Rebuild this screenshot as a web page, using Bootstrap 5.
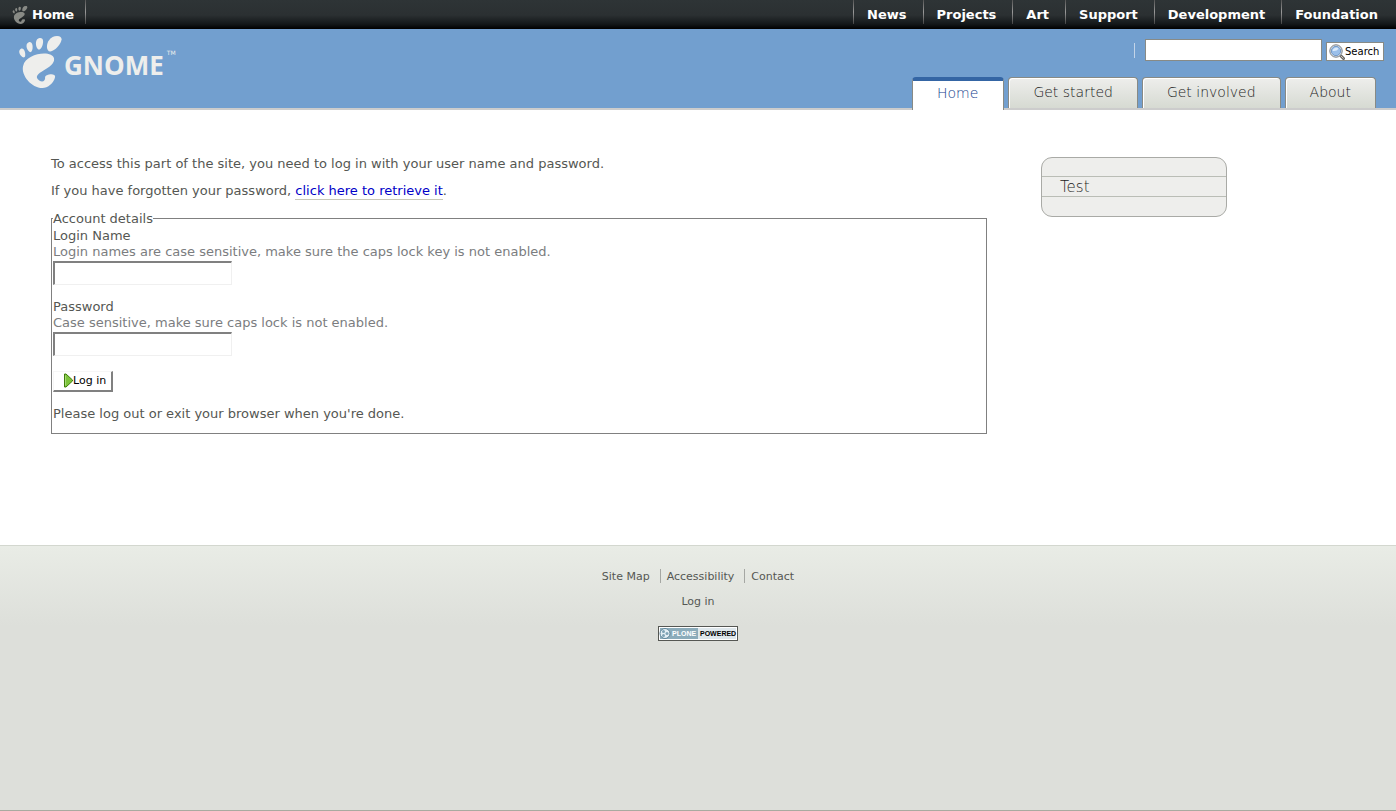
<!DOCTYPE html>
<html lang="en">
<head>
<meta charset="utf-8">
<meta name="viewport" content="width=device-width, initial-scale=1">
<title>GNOME - Log in</title>
<link rel="stylesheet" href="https://cdn.jsdelivr.net/npm/bootstrap@5.3.0/dist/css/bootstrap.min.css">
<style>
body { font: 13px/16px "DejaVu Sans", sans-serif; color: #555753; background: #fff; }
a { color: inherit; text-decoration: none; }
p { margin-bottom: 11px; }

.site-bar { height: 29px; padding-right: 2px; background: linear-gradient(#2e3436 0, #2b3032 15px, #14181a 24px, #000 29px); font-weight: 700; }
.site-bar a { height: 29px; padding: 0 16px 0 13px; line-height: 29px; color: #fff; }
.site-bar .sep { width: 1px; height: 24px; background: linear-gradient(#555, #999 50%, #444); }
.site-bar .home-link { padding: 0 11px 0 12px; }

.masthead { min-height: 81px; background: #729fcf; border-bottom: 2px solid #ccc; }
.logo { padding: 7px 0 0 19px; color: #eeeeec; }
.logo:hover { color: #fff; }
.wordmark { margin: 0 3px 0 2px; padding-top: 18px; font: 700 26px/22px "Open Sans", sans-serif; height: 40px; }
.tm { padding-top: 13px; font: 6px/7px "DejaVu Sans", sans-serif; }
.search { padding: 9px 12px 0 0; gap: 4px; }
.search .sep { width: 1px; height: 15px; margin: 2px 6px 0 0; background: #c3d4e8; }
.search input { width: 177px; height: 22px; border: 1px solid #888a85; padding: 1px 4px; background: #fff; }
.search button { height: 19px; width: 58px; padding: 0 3px 0 2px; border: 1px solid #888a85; background: #fff; color: #000; font-size: 10px; line-height: 16px; }
.tabs { gap: 4px; padding-right: 20px; margin-bottom: -2px; font-size: 14px; font-weight: 200; }
.tabs a { height: 31px; padding: 0 24px; line-height: 28px; border: 1px solid #888a85; border-bottom: 0; border-radius: 4px 4px 0 0; margin-bottom: 2px; background: linear-gradient(#eeeeec, #d6dad2); box-shadow: inset 1px 1px #fff; color: #222; }
.tabs a.current { height: 33px; padding: 0 25px 0 24px; margin-bottom: 0; line-height: 24px; border-top: 4px solid #3465a4; background: #fff; color: #103c8c; }

.page-body { min-height: 435px; padding: 46px 169px 0 51px; gap: 54px; }
.page-body .retrieve { color: #0000c8; border-bottom: 1px solid #c8c8b8; padding-bottom: 1px; }
fieldset { border: 1px solid #808080; padding: 0 1px 11px; }
legend { float: none; width: auto; margin: 0 0 1px; font-size: 13px; line-height: 17px; }
.hint { color: #7b7d80; margin-bottom: 1px; }
.sunken { display: block; width: 179px; height: 24px; padding: 1px 2px; border: 2px solid #808080; border-right: 1px solid #f0f0f0; border-bottom: 1px solid #f0f0f0; background: #fff; }
.field-row { margin-bottom: 14px; }
.field-row + .field-row { margin-bottom: 15px; }
.raised { width: 60px; height: 21px; padding: 0 4px 0 9px; border: 1px solid #f6f6f6; border-right: 2px solid #808080; border-bottom: 2px solid #808080; background: #fff; color: #000; font-size: 11px; line-height: 18px; margin-bottom: 14px; }

.side-box { width: 186px; height: 60px; margin-top: 1px; padding: 18px 0; border: 1px solid #a9aaa6; border-radius: 11px; background: #eeeeec; }
.side-box a { height: 21px; padding-left: 18px; border: solid #babdb6; border-width: 1px 0; font-size: 15px; font-weight: 200; line-height: 20px; color: #222; }

.site-foot { font-size: 11px; border-top: 1px solid #d3d7cf; border-bottom: 1px solid #a9aaa0; background: linear-gradient(#e9ece6, #dddfda 80px); padding-top: 23px; gap: 9px; }
.foot-links .sep { width: 1px; height: 14px; margin: 0 6px 0 10px; background: #a5a7a3; }
.plone { margin-top: 7px; }
</style>
<script src="https://cdn.jsdelivr.net/npm/bootstrap@5.3.0/dist/js/bootstrap.bundle.min.js"></script>
</head>
<body class="d-flex flex-column min-vh-100">

<svg class="d-none" aria-hidden="true">
  <symbol id="foot" viewBox="0 0 96.7 118.3">
    <path d="M86.068 0C61.466 0 56.851 35.041 70.691 35.041 84.529 35.041 110.671 0 86.068 0z"/>
    <path d="M45.217 30.699C52.586 31.149 60.671 2.577 46.821 4.374 32.976 6.171 37.845 30.249 45.217 30.699z"/>
    <path d="M11.445 48.453C16.686 46.146 12.12 23.581 3.208 29.735-5.7 35.89 6.204 50.759 11.445 48.453z"/>
    <path d="M26.212 36.642C32.451 35.37 32.793 9.778 21.667 14.369 10.539 18.961 19.978 37.916 26.212 36.642z"/>
    <path d="M58.791 93.913c1.107 8.454-6.202 12.629-13.36 7.179C22.644 83.743 83.16 75.088 79.171 51.386 75.86 31.712 15.495 37.769 8.621 68.553 3.968 89.374 27.774 118.26 52.614 118.26c12.22 0 26.315-11.034 28.952-25.012C83.58 82.589 57.867 86.86 58.791 93.913z"/>
  </symbol>
</svg>

<nav class="site-bar d-flex" aria-label="GNOME sites">
  <a class="home-link d-flex align-items-center" href="#"><svg class="me-1" width="16" height="18" fill="#888a85" aria-hidden="true"><use href="#foot"/></svg>Home</a>
  <span class="sep me-auto"></span>
  <span class="sep"></span><a href="#">News</a>
  <span class="sep"></span><a href="#">Projects</a>
  <span class="sep"></span><a href="#">Art</a>
  <span class="sep"></span><a href="#">Support</a>
  <span class="sep"></span><a href="#">Development</a>
  <span class="sep"></span><a href="#">Foundation</a>
</nav>

<header class="masthead d-flex justify-content-between">
  <a class="logo d-flex align-items-start" href="#">
    <svg width="43" height="52" fill="#eeeeec" aria-hidden="true"><use href="#foot"/></svg>
    <span class="wordmark">GNOME</span><span class="tm">TM</span>
  </a>
  <div class="d-flex flex-column justify-content-between align-items-end">
    <form class="search d-flex align-items-center">
      <span class="sep"></span>
      <input type="text" aria-label="Search the site">
      <button type="button" class="d-flex align-items-center mt-1">
        <svg width="16" height="16" viewBox="0 0 16 16" aria-hidden="true">
          <path d="M12 12l2.500 2.500" stroke="#666" stroke-width="3" stroke-linecap="round"/>
          <path d="M12 12l2.500 2.500" stroke="#d3c5ae" stroke-width="1"/>
          <circle cx="7" cy="7" r="6.200" fill="#eeeeec" stroke="#777c82"/>
          <circle cx="7" cy="7" r="4.700" fill="#9cc0ea" stroke="#5a86bd" stroke-width=".8"/>
          <path d="M3.500 7a3.500 3.500 0 0 1 6-2.300Q8 7.500 3.500 7z" fill="#dcebfb"/>
        </svg>Search</button>
    </form>
    <nav class="tabs d-flex align-items-end" aria-label="Sections">
      <a class="current" href="#">Home</a>
      <a href="#">Get started</a>
      <a href="#">Get involved</a>
      <a href="#">About</a>
    </nav>
  </div>
</header>

<div class="page-body d-flex align-items-start">
  <main class="flex-fill">
    <p>To access this part of the site, you need to log in with your user name and password.</p>
    <p>If you have forgotten your password, <a class="retrieve" href="#">click here to retrieve it</a>.</p>
    <form>
      <fieldset>
        <legend>Account details</legend>
        <div class="field-row">
          <label class="d-block" for="login">Login Name</label>
          <div class="hint" id="login-hint">Login names are case sensitive, make sure the caps lock key is not enabled.</div>
          <input class="sunken" type="text" id="login" aria-describedby="login-hint">
        </div>
        <div class="field-row">
          <label class="d-block" for="pass">Password</label>
          <div class="hint" id="pass-hint">Case sensitive, make sure caps lock is not enabled.</div>
          <input class="sunken" type="password" id="pass" aria-describedby="pass-hint">
        </div>
        <button type="button" class="raised d-flex align-items-center">
          <svg class="flex-shrink-0" width="10" height="16" viewBox="0 0 10 16" aria-hidden="true"><path d="M1.500 1v13h1.500L9.500 8V7L3 1z" fill="#7cc43a" stroke="#3f7d0a"/><path d="M2.500 2.500v10" stroke="#a5d878"/></svg>Log in</button>
        <p class="mb-0">Please log out or exit your browser when you're done.</p>
      </fieldset>
    </form>
  </main>
  <aside class="side-box"><a class="d-block" href="#">Test</a></aside>
</div>

<footer class="site-foot flex-fill d-flex flex-column align-items-center">
  <div class="foot-links d-flex">
    <a href="#">Site Map</a><span class="sep"></span><a href="#">Accessibility</a><span class="sep"></span><a href="#">Contact</a>
  </div>
  <a href="#">Log in</a>
  <a href="#" class="plone d-flex" aria-label="Plone Powered">
    <svg width="80" height="15" viewBox="0 0 80 15" shape-rendering="crispEdges">
      <path d="M0 0h80v15H0z" fill="#555753"/><path d="M1 1h78v13H1z" fill="#fff"/>
      <path d="M2 2h38v11H2z" fill="#8cacbb"/><path d="M40 2h38v11H40z" fill="#dee7ec"/>
      <g shape-rendering="auto"><circle cx="7" cy="7.500" r="5" fill="#e3eef4" stroke="#5d8499"/><circle cx="5.500" cy="5.500" r="1.500" fill="#7fa3b5"/><circle cx="9" cy="7.500" r="1.500" fill="#7fa3b5"/><circle cx="5.500" cy="9.500" r="1.500" fill="#7fa3b5"/></g>
      <text x="14" y="10" font-family="Liberation Sans" font-size="7" font-weight="700" fill="#fff">PLONE</text>
      <text x="42" y="10" font-family="Liberation Sans" font-size="7" font-weight="700" fill="#000">POWERED</text>
    </svg>
  </a>
</footer>
</body>
</html>
